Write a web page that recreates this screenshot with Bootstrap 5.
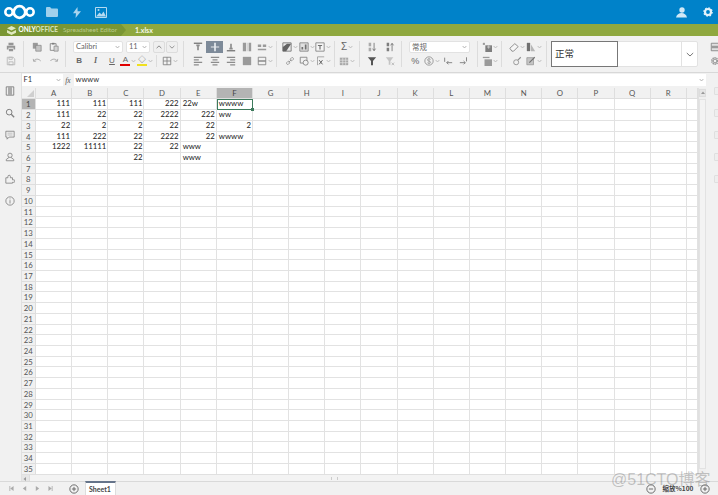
<!DOCTYPE html>
<html lang="zh">
<head>
<meta charset="utf-8">
<title>1.xlsx - ONLYOFFICE</title>
<link href="https://cdn.jsdelivr.net/npm/bootstrap@5.3.0/dist/css/bootstrap.min.css" rel="stylesheet">
<style>
html,body{margin:0;height:495px;overflow:hidden}
body{font-family:Lato,"Noto Sans CJK SC",sans-serif;font-size:8px;line-height:1;color:#333;background:#f1f1f1}
.cjk{font-family:"Noto Sans CJK SC","Noto Sans",sans-serif}
.app{width:718px;height:495px;position:relative}
.ncbar{height:24px;background:#0082c9;flex:none}
.ncbar svg{display:block}
.ncl{padding-left:2px;gap:0}
.nav1{margin-left:8px}.nav2{margin-left:15px}.nav3{margin-left:14px}
.ncr{gap:16.500px;padding-right:5px}
.oobar{height:12px;background:#8fa83f;flex:none;color:#fff;font-weight:700;font-size:6.500px}
.oolead{width:126px;height:12px;background:#7a9633;clip-path:polygon(0 0,121px 0,126px 50%,121px 100%,0 100%);padding-left:7px;gap:2.500px}
.oofade{color:#dbe4bd}.ooname{color:#bccb8a;font-weight:400;margin-left:5px;white-space:nowrap}
.oofile{margin-left:9px;color:#f4f7e8;font-size:7px}
.tbar{height:37px;flex:none;background:#f1f1f1;border-bottom:1px solid #d8d8d8;padding-top:5px;overflow:hidden}
.tg{height:26px;flex:none;border-right:1px solid #dcdcdc;display:flex;flex-direction:column;gap:2px}
.w1{width:24px;padding-left:3px}.w2{width:42px;padding-left:4px}.w3{width:118px;padding-left:5px}
.w4{width:93px;padding-left:6px}.w5{width:58px;padding-left:5px}.w6{width:25px;padding-left:3px}
.w7{width:42px;padding-left:3px}.w8{width:76px;padding-left:5px}.w9{width:24px;padding-left:4px}
.w10{width:45px;padding-left:6px}.w11{width:18px;padding-left:6px;border-right:0}
.tgal{width:154px;flex:none;height:26px;padding-left:4px}
.trw{height:12px;display:flex;align-items:center}
.tb{width:16.400px;height:12px;flex:none;display:flex;align-items:center;justify-content:center;color:#666;font-weight:700}
.tb svg{width:10px;height:10px;opacity:.82}
.tb17{width:17px}.tb18{width:18px}.tb20{width:19px}
.tb.on{background:#7d8a99;color:#fff}
.tb.on svg{opacity:1}
.car{width:5px!important;height:4px!important;margin-left:1px;flex:none}
.lit{font-family:"Liberation Sans",sans-serif;font-size:8px}
.lit.it{font-style:italic;font-family:"Liberation Serif",serif}
.lit.un{text-decoration:underline;font-weight:400}
.sig{font-size:10px}.pct{font-size:9px}
.chr{display:flex;flex-direction:column;align-items:center;font-size:8px;font-family:"Liberation Sans",sans-serif;line-height:8px;font-weight:400}
.chr i{display:block;width:10px;height:2px}
.redb{background:#e00000}.ylwb{background:#f0e020}
.cbo{height:12px;background:#fff;border:1px solid #e2e2e2;border-radius:2px;flex:none;padding:0 2px;color:#666;font-size:7.500px}
.cfont{width:50px;margin-left:2px}.csize{width:24px;margin-left:3px}.cnum{width:61px;margin-left:2px}
.cbtn{width:12px;height:12px;border:1px solid #dcdcdc;border-radius:2px;margin-left:1px;flex:none;background:#efefef}
.cbtn.first{margin-left:3px}.cbtn svg{width:6px;height:4px;display:block}
.vs{width:1px;height:12px;background:#dcdcdc;margin:0 5px 0 3px;flex:none}
.gal{height:26px;width:147px;background:#fff;border:1px solid #e2e2e2;border-radius:2px}
.gitem{width:67px;height:26px;margin:-1px 0 -1px -1px;border:1px solid #777;background:#fff;font-size:9.500px;color:#333;padding-left:3px;flex:none}
.gexp{width:16px;height:24px;border-left:1px solid #e2e2e2;flex:none}
.gexp svg{width:8px;height:5px}
.rail{width:21.500px;flex:none;border-right:1px solid #e0e0e0;padding-top:13px;gap:12px;display:flex;flex-direction:column;align-items:center}
.rail svg{width:10px;height:10px;display:block;opacity:.8}
.rrail{width:12px;flex:none;padding-top:14px;gap:14px;display:flex;flex-direction:column;align-items:flex-start;padding-left:8px}
.rrail i{display:block;width:8px;height:8px;border:1px solid #dfdfdf;border-radius:1px;background:#eee}
.fbar{height:15px;flex:none;padding-top:1px;gap:1px}
.fname{width:41px;height:12px;background:#fff;padding:0 2px;font-size:7.500px;flex:none}
.fname svg,.finp svg{width:5px;height:4px}
.ffx{width:9px;height:12px;font:italic 7.500px "Liberation Serif",serif;color:#555;flex:none}
.finp{height:12px;background:#fff;padding:0 2px;font-size:7.500px}
.sheet{display:grid;grid-template-columns:14.500px repeat(18,36.170px) 1fr;grid-template-rows:11.450px repeat(35,10.730px);background:#fff;overflow:hidden;flex:1 1 0;min-width:0}
.cl{border-right:1px solid #e2e2e2;border-bottom:1px solid #e2e2e2;white-space:nowrap;font-size:7.800px;line-height:9.500px;padding:0 1px;color:#222;overflow:visible;min-width:0}
.cl.tx{padding-left:2px}
.hd{background:#f1f1f1;color:#555;text-align:center;padding:0;line-height:10px;border-color:#dedede}
.hd.sel{background:#b4b4b4;color:#444}
.cl.cur{outline:1.500px solid #3d7a5c;outline-offset:-1px;position:relative}
.cl.cur::after{content:"";position:absolute;right:-2px;bottom:-2px;width:3px;height:3px;background:#3d7a5c}
.cnr{position:relative}
.cnr::after{content:"";position:absolute;right:1px;bottom:1px;border-style:solid;border-width:0 0 7px 7px;border-color:transparent transparent #cfcfcf transparent}
.vsb{width:8px;flex:none;background:#efefef;border-left:1px solid #e0e0e0;padding-top:1px}
.vup{width:7px;height:8px;background:#e6e6e6;border:1px solid #ddd;flex:none}
.vup svg,.hlt svg{width:4px;height:4px;display:block}
.vth{width:7px;margin-top:2px;background:#f3f3f3;border:1px solid #e2e2e2;height:370px}
.hsb{height:7px;flex:none;background:#efefef;border-top:1px solid #e0e0e0}
.hlt{width:8px;height:7px;background:#e6e6e6;border-right:1px solid #ddd;flex:none}
.hth{flex:1 1 0;height:6px;background:#f3f3f3}
.grip{width:7px;height:3px;border-left:1px solid #ccc;border-right:1px solid #ccc;margin-right:368px;margin-left:auto}
.stbar{height:14px;flex:none;background:#f1f1f1;border-top:1px solid #d9d9d9;color:#555}
.navb{width:13px;flex:none;color:#aaa}
.navb svg{width:5px;height:5px;display:block}
.nav0{padding-left:8.500px}
.addb{margin-left:8px;width:10px;height:10px;flex:none}
.addb svg,.zb svg{width:10px;height:10px;display:block}
.stab{margin-left:6px;width:31px;height:14px;background:#fff;border-top:2px solid #65748a;border-left:1px solid #ddd;border-right:1px solid #ddd;font-size:7px;font-weight:700;color:#444;margin-top:-1px}
.zm{margin-left:auto;padding-right:8px;gap:0}
.zlb{width:44px;font-size:6.500px;font-weight:700;color:#444;text-align:center;white-space:nowrap}
.wmk{position:absolute;left:611px;top:470px;font-size:16px;line-height:20px;color:rgba(110,110,110,.38);font-family:"Liberation Sans","Noto Sans CJK SC",sans-serif;white-space:nowrap;pointer-events:none}
</style>
</head>
<body>
<svg width="0" height="0" class="position-absolute">
<defs>
<symbol id="i-caret" viewBox="0 0 6 4"><path d="M.8.8 3 3.200 5.200.8" fill="none" stroke="#aaa" stroke-width="1"/></symbol>
<symbol id="i-chev" viewBox="0 0 8 5"><path d="M.8 1 4 4 7.200 1" fill="none" stroke="#777" stroke-width="1"/></symbol>
<symbol id="i-chup" viewBox="0 0 8 5"><path d="M.8 4 4 1 7.200 4" fill="none" stroke="#666" stroke-width="1"/></symbol>
<symbol id="i-print" viewBox="0 0 12 12"><path d="M3 1h6v3H3zM1 4.500h10v4.500H9V7H3v2H1zM3.500 8h5v3h-5z" fill="currentColor" opacity=".8"/></symbol>
<symbol id="i-save" viewBox="0 0 12 12"><path d="M1.500 1.500h7l2 2v7h-9z M3.500 7h5v3.500h-5z M3.500 1.500h4v2.500h-4z" fill="none" stroke="#aaa"/></symbol>
<symbol id="i-copy" viewBox="0 0 12 12"><path d="M1 1h6v7H1z" fill="#888"/><path d="M4.500 4h6.500v7H4.500z" fill="#bbb" stroke="#666" stroke-width=".8"/></symbol>
<symbol id="i-paste" viewBox="0 0 12 12"><path d="M1.500 2h7v8h-7z" fill="none" stroke="#666"/><path d="M3.500 1h3v2h-3z" fill="#666"/><path d="M6 5h5v6H6z" fill="#ccc" stroke="#666" stroke-width=".8"/></symbol>
<symbol id="i-undo" viewBox="0 0 12 12"><path d="M2 6c2-3 6-3 8.500 0M1.500 3.500 2 6.500l3-.5" fill="none" stroke="#999" stroke-width="1.100"/></symbol>
<symbol id="i-redo" viewBox="0 0 12 12"><path d="M10 6C8 3 4 3 1.500 6M10.500 3.500 10 6.500l-3-.5" fill="none" stroke="#999" stroke-width="1.100"/></symbol>
<symbol id="i-grid" viewBox="0 0 12 12"><path d="M1.500 1.500h9v9h-9zM6 1.500v9M1.500 6h9" fill="none" stroke="#666" stroke-width="1"/></symbol>
<symbol id="i-atop" viewBox="0 0 12 12"><path d="M1 1.500h10" stroke="#555" stroke-width="1.500"/><path d="M4 3h4v2H7v5H5V5H4z" fill="#777"/></symbol>
<symbol id="i-amid" viewBox="0 0 12 12"><path d="M1 6h10" stroke="#fff" stroke-width="1"/><path d="M5 1h2v10H5z" fill="#e8ecf0"/></symbol>
<symbol id="i-abot" viewBox="0 0 12 12"><path d="M1 10.500h10" stroke="#555" stroke-width="1.500"/><path d="M5 2h2v5h1v2H4V7h1z" fill="#777"/></symbol>
<symbol id="i-wrap" viewBox="0 0 12 12"><path d="M1 1h4v10H1zM8 1h3v10H8z" fill="#888"/><path d="M6 1h1v10H6z" fill="#ccc"/></symbol>
<symbol id="i-ftop" viewBox="0 0 12 12"><path d="M1 3h4v3H1zM7 3h4v3H7zM1 8h10v2H1z" fill="#888"/></symbol>
<symbol id="i-al" viewBox="0 0 12 12"><path d="M1 1h10v1.500H1zM1 4h6v1.500H1zM1 7h10v1.500H1zM1 10h6v1.500H1z" fill="#777"/></symbol>
<symbol id="i-ac" viewBox="0 0 12 12"><path d="M1 1h10v1.500H1zM3 4h6v1.500H3zM1 7h10v1.500H1zM3 10h6v1.500H3z" fill="#777"/></symbol>
<symbol id="i-ar" viewBox="0 0 12 12"><path d="M1 1h10v1.500H1zM5 4h6v1.500H5zM1 7h10v1.500H1zM5 10h6v1.500H5z" fill="#777"/></symbol>
<symbol id="i-aj" viewBox="0 0 12 12"><path d="M1 1h10v10H1z" fill="#888"/></symbol>
<symbol id="i-merge" viewBox="0 0 12 12"><path d="M1.500 1.500h9v9h-9z" fill="none" stroke="#666"/><path d="M1.500 6h9" stroke="#666" stroke-width="1.600"/></symbol>
<symbol id="i-pic" viewBox="0 0 12 12"><path d="M1 1h10v10H1z" fill="#e8e8e8" stroke="#555"/><path d="M1 11 1 6l5-4 5 0-6 9z" fill="#444"/></symbol>
<symbol id="i-chart" viewBox="0 0 12 12"><path d="M1 1h10v10H1z" fill="#ddd" stroke="#666"/><path d="M7 9V3h2v6zM3 9V6h2v3z" fill="#555"/></symbol>
<symbol id="i-txt" viewBox="0 0 12 12"><path d="M1 1h10v10H1z" fill="#f6f6f6" stroke="#666"/><path d="M3.500 3.500h5v1.200H6.700V9H5.300V4.700H3.500z" fill="#555"/></symbol>
<symbol id="i-link" viewBox="0 0 12 12"><path d="M4.500 7.500 7.500 4.500M2 8a1.500 1.500 0 0 0 2 2l1.500-1.500a1.500 1.500 0 0 0-2-2zM6.500 3.500a1.500 1.500 0 0 0 2 2L10 4a1.500 1.500 0 0 0-2-2z" fill="none" stroke="#777"/></symbol>
<symbol id="i-cmt" viewBox="0 0 12 12"><path d="M1.500 1.500h8v7h-8z" fill="none" stroke="#666"/><circle cx="8" cy="8" r="3" fill="#f1f1f1" stroke="#666"/></symbol>
<symbol id="i-fx" viewBox="0 0 12 12"><path d="M11 1H3v3M3 4v7" fill="none" stroke="#888"/><path d="m5 5 4 5M9 5l-4 5" stroke="#444" stroke-width="1.200"/></symbol>
<symbol id="i-tbl" viewBox="0 0 12 12"><path d="M1 2h10v9H1z" fill="#999"/><path d="M1 5h10M1 8h10M4.500 2v9M8 2v9" stroke="#eee" stroke-width=".7"/></symbol>
<symbol id="i-sa" viewBox="0 0 12 12"><path d="M2 1h3v4H2zM2 7h3v4H2z" fill="#777" opacity=".7"/><path d="M8.500 1v9M6.800 8l1.700 2.500L10.200 8" fill="none" stroke="#555"/></symbol>
<symbol id="i-sd" viewBox="0 0 12 12"><path d="M2 1h3v4H2zM2 7h3v4H2z" fill="#666"/><path d="M8.500 11V2M6.800 4l1.700-2.500L10.200 4" fill="none" stroke="#555"/></symbol>
<symbol id="i-flt" viewBox="0 0 12 12"><path d="M1 1.500h10L7.200 6v5H4.800V6z" fill="#333"/></symbol>
<symbol id="i-flx" viewBox="0 0 12 12"><path d="M1 1.500h9L6.500 6v4.500h-2V6z" fill="#bbb"/><path d="m8 8 3 3M11 8l-3 3" stroke="#aaa"/></symbol>
<symbol id="i-dec1" viewBox="0 0 12 12"><path d="M2 2v5M11 8H4.500M6.500 6 4.500 8l2 2" fill="none" stroke="#666" stroke-width="1.100"/></symbol>
<symbol id="i-dec2" viewBox="0 0 12 12"><path d="M9 1.500v5M1 8h6.500M5.500 6l2 2-2 2" fill="none" stroke="#666" stroke-width="1.100"/></symbol>
<symbol id="i-dol" viewBox="0 0 12 12"><circle cx="6" cy="6" r="5" fill="none" stroke="#777"/><path d="M8 4.200C7 3 4 3 4 4.700S8 5.800 8 7.500 5 9.200 4 8M6 2.500v7" fill="none" stroke="#777" stroke-width=".8"/></symbol>
<symbol id="i-ins" viewBox="0 0 12 12"><path d="M4 4h8v8H4z" fill="#666"/><path d="M1 1h2.500v2.500H1z" fill="#888"/><path d="M6 6h4M8 4v4" stroke="#ccc"/></symbol>
<symbol id="i-del" viewBox="0 0 12 12"><path d="M3 4h9v8H3z" fill="#888"/><path d="M1 1h8v1.500H1z" fill="#888"/></symbol>
<symbol id="i-era" viewBox="0 0 12 12"><path d="M1 7.500 7 2l4 3.500L5.500 11H3.500z" fill="#f8f8f8" stroke="#666"/></symbol>
<symbol id="i-cf" viewBox="0 0 12 12"><path d="M1 1h4v10H1z" fill="#555"/><path d="M6 3l5 8H6z" fill="#aaa"/></symbol>
<symbol id="i-brush" viewBox="0 0 12 12"><circle cx="5" cy="7.500" r="3" fill="none" stroke="#777"/><path d="m7 5 3.500-3.500" stroke="#777" stroke-width="1.300"/></symbol>
<symbol id="i-ed" viewBox="0 0 12 12"><path d="M1 2h8v8.500H1z" fill="#bbb" stroke="#777" stroke-width=".8"/><path d="m4 8 6.500-6.500" stroke="#555" stroke-width="1.300"/></symbol>
<symbol id="i-set" viewBox="0 0 12 12"><path d="M1.500 1.500h9v9h-9z" fill="#ddd" stroke="#666"/><path d="M1.500 4.500h9v3h-9z" fill="#888"/></symbol>
<symbol id="i-gear" viewBox="0 0 12 12"><circle cx="6" cy="6" r="3.500" fill="none" stroke="#888" stroke-width="2.500" stroke-dasharray="1.500 .7"/><circle cx="6" cy="6" r="2" fill="none" stroke="#888"/></symbol>
<symbol id="i-file" viewBox="0 0 12 12"><path d="M1.500 1h9v10h-9z" fill="#f6f6f6" stroke="#555" stroke-width="1"/><path d="M3.500 1h5v10h-5z" fill="#999"/></symbol>
<symbol id="i-srch" viewBox="0 0 12 12"><circle cx="5" cy="5" r="3.400" fill="none" stroke="#666" stroke-width="1.200"/><path d="M7.500 7.500 11 11" stroke="#666" stroke-width="1.600"/></symbol>
<symbol id="i-bub" viewBox="0 0 12 12"><path d="M1 1.500h10v7H5L2.500 11V8.500H1z" fill="none" stroke="#666"/><path d="M3 3.800h6M3 6h6" stroke="#999" stroke-width=".8"/></symbol>
<symbol id="i-usr" viewBox="0 0 12 12"><circle cx="6" cy="4" r="2.600" fill="none" stroke="#666"/><path d="M4.800 6.500 1.500 9v1.500h9V9L7.200 6.500" fill="none" stroke="#666"/></symbol>
<symbol id="i-plg" viewBox="0 0 12 12"><path d="M1 4.500h2.500V3a1.500 1.500 0 0 1 3 0v1.500H9V7h1.500a1.500 1.500 0 0 1 0 3H9v1H1z" fill="none" stroke="#666"/></symbol>
<symbol id="i-inf" viewBox="0 0 12 12"><circle cx="6" cy="6" r="5" fill="none" stroke="#666"/><path d="M6 5v4M6 3v1" stroke="#666" stroke-width="1"/></symbol>
<symbol id="i-first" viewBox="0 0 6 6"><path d="M1 0v6" stroke="currentColor"/><path d="M5.500 0v6L1.500 3z" fill="currentColor"/></symbol>
<symbol id="i-prev" viewBox="0 0 6 6"><path d="M5 0v6L1 3z" fill="currentColor"/></symbol>
<symbol id="i-next" viewBox="0 0 6 6"><path d="M1 0v6l4-3z" fill="currentColor"/></symbol>
<symbol id="i-last" viewBox="0 0 6 6"><path d="M5 0v6" stroke="currentColor"/><path d="M.5 0v6l4-3z" fill="currentColor"/></symbol>
<symbol id="i-cplus" viewBox="0 0 12 12"><circle cx="6" cy="6" r="5" fill="none" stroke="#555"/><path d="M3.500 6h5M6 3.500v5" stroke="#555"/></symbol>
<symbol id="i-cminus" viewBox="0 0 12 12"><circle cx="6" cy="6" r="5" fill="none" stroke="#555"/><path d="M3.500 6h5" stroke="#555"/></symbol>
</defs>
</svg>

<div class="app d-flex flex-column">
  <div class="ncbar d-flex align-items-center justify-content-between">
    <div class="ncl d-flex align-items-center">
      <svg width="36" height="18" viewBox="0 0 36 18"><g fill="none" stroke="#fff"><circle cx="7" cy="9" r="3.700" stroke-width="2.500"/><circle cx="17.500" cy="9" r="5.800" stroke-width="2.800"/><circle cx="28" cy="9" r="3.700" stroke-width="2.500"/></g></svg>
      <svg class="nav1" width="12" height="10" viewBox="0 0 12 10"><path d="M0 1a1 1 0 0 1 1-1h3l1.500 1.500H11a1 1 0 0 1 1 1V9a1 1 0 0 1-1 1H1a1 1 0 0 1-1-1z" fill="#9fd0ec"/></svg>
      <svg class="nav2" width="8" height="11" viewBox="0 0 8 11"><path d="M4.500 0 0 6.200h3L2.500 11 8 4.300H4.600z" fill="#a8d4ee"/></svg>
      <svg class="nav3" width="12" height="11" viewBox="0 0 12 11"><path d="M.5.500h11v10H.5z" fill="none" stroke="#b4daf1"/><path d="m1 9.500 3.500-4 2 2 2-3L11 9.500z" fill="#b4daf1"/><circle cx="3.500" cy="3" r="1" fill="#b4daf1"/></svg>
    </div>
    <div class="ncr d-flex align-items-center">
      <svg width="11" height="11" viewBox="0 0 11 11"><circle cx="6" cy="3" r="2.700" fill="#cfe8f6"/><path d="M0 10.500c.5-3 3-4.500 5.500-4.500s5 1.500 5.500 4.500z" fill="#cfe8f6"/></svg>
      <svg width="10" height="10" viewBox="0 0 12 12"><circle cx="6" cy="6" r="3.600" fill="none" stroke="#e4f2fa" stroke-width="2.600"/><circle cx="6" cy="6" r="5" fill="none" stroke="#e4f2fa" stroke-width="1.500" stroke-dasharray="2 1.900"/></svg>
    </div>
  </div>

  <div class="oobar d-flex align-items-center">
    <div class="oolead d-flex align-items-center">
      <svg width="9" height="9" viewBox="0 0 8 8"><path d="M4 0 8 2 4 4 0 2zM0 3.500 4 5.500 8 3.500V6L4 8 0 6z" fill="#dfe8bf"/></svg>
      <span class="text-nowrap">ONLY<span class="oofade">OFFICE</span><span class="ooname">Spreadsheet Editor</span></span>
    </div>
    <span class="oofile">1.xlsx</span>
  </div>

  <div class="tbar d-flex">
    <div class="tg w1">
      <div class="trw"><span class="tb"><svg><use href="#i-print"/></svg></span></div>
      <div class="trw"><span class="tb"><svg><use href="#i-save"/></svg></span></div>
    </div>
    <div class="tg w2">
      <div class="trw"><span class="tb tb17"><svg><use href="#i-copy"/></svg></span><span class="tb tb17"><svg><use href="#i-paste"/></svg></span></div>
      <div class="trw"><span class="tb tb17"><svg><use href="#i-undo"/></svg></span><span class="tb tb17"><svg><use href="#i-redo"/></svg></span></div>
    </div>
    <div class="tg w3">
      <div class="trw">
        <div class="cbo cfont d-flex align-items-center justify-content-between"><span>Calibri</span><svg class="car"><use href="#i-caret"/></svg></div>
        <div class="cbo csize d-flex align-items-center justify-content-between"><span>11</span><svg class="car"><use href="#i-caret"/></svg></div>
        <div class="cbtn first d-flex align-items-center justify-content-center"><svg><use href="#i-chup"/></svg></div>
        <div class="cbtn d-flex align-items-center justify-content-center"><svg><use href="#i-chev"/></svg></div>
      </div>
      <div class="trw">
        <span class="tb"><span class="lit">B</span></span>
        <span class="tb"><span class="lit it">I</span></span>
        <span class="tb"><span class="lit un">U</span></span>
        <span class="tb"><span class="chr">A<i class="redb"></i></span><svg class="car"><use href="#i-caret"/></svg></span>
        <span class="tb"><span class="chr">&#9671;<i class="ylwb"></i></span><svg class="car"><use href="#i-caret"/></svg></span>
        <span class="vs"></span>
        <span class="tb"><svg><use href="#i-grid"/></svg><svg class="car"><use href="#i-caret"/></svg></span>
      </div>
    </div>
    <div class="tg w4">
      <div class="trw">
        <span class="tb"><svg><use href="#i-atop"/></svg></span>
        <span class="tb on"><svg><use href="#i-amid"/></svg></span>
        <span class="tb"><svg><use href="#i-abot"/></svg></span>
        <span class="tb"><svg><use href="#i-wrap"/></svg></span>
        <span class="tb tb20"><svg><use href="#i-ftop"/></svg><svg class="car"><use href="#i-caret"/></svg></span>
      </div>
      <div class="trw">
        <span class="tb"><svg><use href="#i-al"/></svg></span>
        <span class="tb"><svg><use href="#i-ac"/></svg></span>
        <span class="tb"><svg><use href="#i-ar"/></svg></span>
        <span class="tb"><svg><use href="#i-aj"/></svg></span>
        <span class="tb tb20"><svg><use href="#i-merge"/></svg><svg class="car"><use href="#i-caret"/></svg></span>
      </div>
    </div>
    <div class="tg w5">
      <div class="trw">
        <span class="tb"><svg><use href="#i-pic"/></svg><svg class="car"><use href="#i-caret"/></svg></span>
        <span class="tb"><svg><use href="#i-chart"/></svg><svg class="car"><use href="#i-caret"/></svg></span>
        <span class="tb"><svg><use href="#i-txt"/></svg><svg class="car"><use href="#i-caret"/></svg></span>
      </div>
      <div class="trw">
        <span class="tb"><svg><use href="#i-link"/></svg></span>
        <span class="tb"><svg><use href="#i-cmt"/></svg><svg class="car"><use href="#i-caret"/></svg></span>
        <span class="tb"><svg><use href="#i-fx"/></svg><svg class="car"><use href="#i-caret"/></svg></span>
      </div>
    </div>
    <div class="tg w6">
      <div class="trw"><span class="tb tb18 lit sig fw-normal">&Sigma;<svg class="car"><use href="#i-caret"/></svg></span></div>
      <div class="trw"><span class="tb tb18"><svg><use href="#i-tbl"/></svg><svg class="car"><use href="#i-caret"/></svg></span></div>
    </div>
    <div class="tg w7">
      <div class="trw"><span class="tb tb18"><svg><use href="#i-sa"/></svg></span><span class="tb tb18"><svg><use href="#i-sd"/></svg></span></div>
      <div class="trw"><span class="tb tb18"><svg><use href="#i-flt"/></svg></span><span class="tb tb18"><svg><use href="#i-flx"/></svg></span></div>
    </div>
    <div class="tg w8">
      <div class="trw"><div class="cbo cnum cjk d-flex align-items-center justify-content-between"><span>常规</span><svg class="car"><use href="#i-caret"/></svg></div></div>
      <div class="trw">
        <span class="tb lit pct fw-normal">%</span>
        <span class="tb"><svg><use href="#i-dol"/></svg><svg class="car"><use href="#i-caret"/></svg></span>
        <span class="tb"><svg><use href="#i-dec1"/></svg></span>
        <span class="tb"><svg><use href="#i-dec2"/></svg></span>
      </div>
    </div>
    <div class="tg w9">
      <div class="trw"><span class="tb"><svg><use href="#i-ins"/></svg><svg class="car"><use href="#i-caret"/></svg></span></div>
      <div class="trw"><span class="tb"><svg><use href="#i-del"/></svg><svg class="car"><use href="#i-caret"/></svg></span></div>
    </div>
    <div class="tg w10">
      <div class="trw"><span class="tb tb17"><svg><use href="#i-era"/></svg><svg class="car"><use href="#i-caret"/></svg></span><span class="tb tb17"><svg><use href="#i-cf"/></svg><svg class="car"><use href="#i-caret"/></svg></span></div>
      <div class="trw"><span class="tb tb17"><svg><use href="#i-brush"/></svg></span><span class="tb tb17"><svg><use href="#i-ed"/></svg><svg class="car"><use href="#i-caret"/></svg></span></div>
    </div>
    <div class="tgal">
      <div class="gal d-flex align-items-center justify-content-between">
        <div class="gitem cjk d-flex align-items-center">正常</div>
        <div class="gexp d-flex align-items-center justify-content-center"><svg><use href="#i-chev"/></svg></div>
      </div>
    </div>
    <div class="tg w11">
      <div class="trw"><span class="tb"><svg><use href="#i-set"/></svg></span></div>
      <div class="trw"><span class="tb"><svg><use href="#i-gear"/></svg></span></div>
    </div>
  </div>

  <div class="d-flex flex-grow-1 overflow-hidden">
    <div class="rail">
      <svg><use href="#i-file"/></svg><svg><use href="#i-srch"/></svg><svg><use href="#i-bub"/></svg><svg><use href="#i-usr"/></svg><svg><use href="#i-plg"/></svg><svg><use href="#i-inf"/></svg>
    </div>
    <div class="d-flex flex-column flex-grow-1 overflow-hidden">
      <div class="fbar d-flex">
        <div class="fname d-flex align-items-center justify-content-between"><span>F1</span><svg><use href="#i-caret"/></svg></div>
        <div class="ffx d-flex align-items-center justify-content-center">fx</div>
        <div class="finp flex-grow-1 d-flex align-items-center justify-content-between"><span>wwww</span><svg><use href="#i-caret"/></svg></div>
      </div>
      <div class="d-flex flex-grow-1 overflow-hidden">
        <div class="sheet" id="sheet"></div>
        <div class="vsb d-flex flex-column">
          <div class="vup d-flex align-items-center justify-content-center"><svg viewBox="0 0 4 4"><path d="M0 3 2 .5 4 3z" fill="#999"/></svg></div>
          <div class="vth"></div>
        </div>
      </div>
      <div class="hsb d-flex">
        <div class="hlt d-flex align-items-center justify-content-center"><svg viewBox="0 0 4 4"><path d="M3 0 .5 2 3 4z" fill="#999"/></svg></div>
        <div class="hth d-flex align-items-center"><div class="grip"></div></div>
      </div>
    </div>
    <div class="rrail"><i></i><i></i><i></i><i></i><i></i></div>
  </div>

  <div class="stbar d-flex align-items-center">
    <div class="nav0 d-flex align-items-center">
      <span class="navb"><svg><use href="#i-first"/></svg></span>
      <span class="navb"><svg><use href="#i-prev"/></svg></span>
      <span class="navb"><svg><use href="#i-next"/></svg></span>
      <span class="navb"><svg><use href="#i-last"/></svg></span>
    </div>
    <span class="addb"><svg><use href="#i-cplus"/></svg></span>
    <div class="stab d-flex align-items-center justify-content-center">Sheet1</div>
    <div class="zm d-flex align-items-center">
      <span class="zb"><svg><use href="#i-cminus"/></svg></span>
      <span class="zlb cjk">缩放%100</span>
      <span class="zb"><svg><use href="#i-cplus"/></svg></span>
    </div>
  </div>

  <div class="wmk">@51CTO博客</div>
</div>

<script src="https://cdn.jsdelivr.net/npm/bootstrap@5.3.0/dist/js/bootstrap.bundle.min.js"></script>
<script>
var data = {
  1:[["111"],["111"],["111"],["222"],["22w",1],["wwww",1]],
  2:[["111"],["22"],["22"],["2222"],["222"],["ww",1]],
  3:[["22"],["2"],["2"],["22"],["22"],["2"]],
  4:[["111"],["222"],["22"],["2222"],["22"],["wwww",1]],
  5:[["1222"],["11111"],["22"],["22"],["www",1]],
  6:[[""],[""],["22"],[""],["www",1]]
};
var sheet = document.getElementById("sheet");
function cell(text, cls){
  var d = document.createElement("div");
  d.className = "cl " + cls;
  d.textContent = text;
  sheet.appendChild(d);
}
cell("", "hd cnr");
"ABCDEFGHIJKLMNOPQR".split("").forEach(function(c){ cell(c, "hd" + (c === "F" ? " sel" : "")); });
cell("", "hd");
for (var r = 1; r <= 35; r++) {
  cell(String(r), "hd" + (r === 1 ? " sel" : ""));
  var row = data[r] || [];
  for (var c = 0; c < 19; c++) {
    var v = row[c];
    var cls = v && v[1] ? "tx" : "text-end";
    if (r === 1 && c === 5) cls += " cur";
    cell(v ? v[0] : "", cls);
  }
}
</script>
</body>
</html>
